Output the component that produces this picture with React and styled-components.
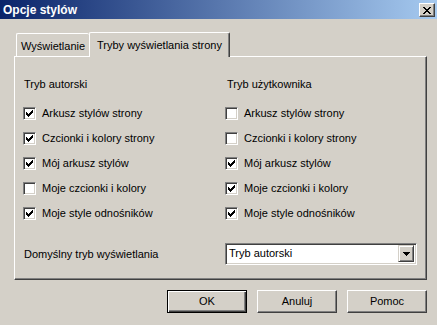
import React from "react";
import styled, { createGlobalStyle } from "styled-components";

const Global = createGlobalStyle`
  html, body { margin: 0; padding: 0; background: #d4d0c8; }
  body { font-family: "Liberation Sans", Arial, sans-serif; font-size: 11px; color: #000; }
`;

const Window = styled.div`
  width: 437px;
  height: 325px;
  background: #d4d0c8;
  display: flex;
  flex-direction: column;
  overflow: hidden;
`;

const TitleBar = styled.div`
  height: 19px;
  flex: none;
  display: flex;
  align-items: center;
  justify-content: space-between;
  padding: 0 2px 0 3px;
  background: linear-gradient(to right, #0a246a, #a6caf0);
`;

const Title = styled.span`
  color: #fff;
  font-weight: bold;
  font-size: 12px;
  line-height: 14px;
  padding-top: 1px;
`;

const CloseButton = styled.div`
  width: 16px;
  height: 14px;
  box-sizing: border-box;
  background: #d4d0c8;
  border: 1px solid;
  border-color: #fff #404040 #404040 #fff;
  box-shadow: inset -1px -1px #808080;
  display: flex;
  align-items: center;
  justify-content: center;
  margin-top: 1px;
`;

const TabRow = styled.div`
  display: flex;
  align-items: flex-end;
  padding-left: 16px;
  margin-top: 13px;
`;

const Tab = styled.div`
  box-sizing: border-box;
  height: ${p => (p.$active ? 25 : 23)}px;
  width: ${p => (p.$active ? 141 : 73)}px;
  margin-bottom: ${p => (p.$active ? -1 : 0)}px;
  position: relative;
  z-index: ${p => (p.$active ? 2 : 1)};
  background: #d4d0c8;
  border-top: 1px solid #fff;
  border-left: 1px solid #fff;
  border-right: ${p => (p.$active ? "1px solid #404040" : "none")};
  box-shadow: ${p => (p.$active ? "inset -1px 0 #808080" : "none")};
  border-radius: 2px 2px 0 0;
  display: flex;
  align-items: center;
  padding-left: ${p => (p.$active ? 7 : 4)}px;
  padding-top: ${p => (p.$active ? 1 : 2)}px;
  line-height: 13px;
  white-space: nowrap;
`;

const Panel = styled.div`
  box-sizing: border-box;
  margin-left: 14px;
  width: 413px;
  height: 224px;
  flex: none;
  border: 1px solid;
  border-color: #fff #404040 #404040 #fff;
  box-shadow: inset -1px -1px #808080;
  padding: 21px 0 0 8px;
  display: flex;
  flex-direction: column;
`;

const Columns = styled.div`
  display: grid;
  grid-template-columns: 202px 1fr;
`;

const Column = styled.div`
  display: flex;
  flex-direction: column;
`;

const Heading = styled.div`
  line-height: 13px;
  padding-left: ${p => p.$indent}px;
  margin-bottom: 10px;
`;

const CheckRow = styled.label`
  height: 25px;
  display: flex;
  align-items: center;
  line-height: 13px;
`;

const Box = styled.span`
  box-sizing: border-box;
  width: 13px;
  height: 13px;
  flex: none;
  background: #fff;
  border: 1px solid;
  border-color: #808080 #fff #fff #808080;
  box-shadow: inset 1px 1px #404040, inset -1px -1px #d4d0c8;
  position: relative;
  margin-right: 6px;
`;

const CheckSvg = styled.svg`
  position: absolute;
  left: -1px;
  top: -1px;
`;

const ComboRow = styled.div`
  display: flex;
  align-items: center;
  margin-top: 17px;
`;

const ComboLabel = styled.div`
  width: 201px;
  padding-left: 1px;
  line-height: 13px;
`;

const Combo = styled.div`
  box-sizing: border-box;
  width: 192px;
  height: 22px;
  background: #fff;
  border: 1px solid;
  border-color: #808080 #fff #fff #808080;
  box-shadow: inset 1px 1px #404040, inset -1px -1px #d4d0c8;
  display: flex;
  align-items: center;
  padding: 1px 2px 2px 2px;
`;

const ComboText = styled.div`
  flex: 1;
  padding-left: 1px;
  line-height: 13px;
`;

const ComboButton = styled.div`
  box-sizing: border-box;
  width: 16px;
  height: 17px;
  background: #d4d0c8;
  border: 1px solid;
  border-color: #d4d0c8 #404040 #404040 #d4d0c8;
  box-shadow: inset 1px 1px #fff, inset -1px -1px #808080;
  display: flex;
  align-items: center;
  justify-content: center;
`;

const ButtonRow = styled.div`
  display: flex;
  justify-content: flex-end;
  gap: 10px;
  padding-right: 10px;
  margin-top: 10px;
`;

const Button = styled.div`
  box-sizing: border-box;
  width: 80px;
  height: 23px;
  background: #d4d0c8;
  border: 1px solid;
  border-color: ${p => (p.$default ? "#000" : "#fff #404040 #404040 #fff")};
  box-shadow: ${p =>
    p.$default
      ? "inset 1px 1px #fff, inset -1px -1px #404040, inset -2px -2px #808080"
      : "inset -1px -1px #808080"};
  display: flex;
  align-items: center;
  justify-content: center;
  line-height: 13px;
`;

const CheckMark = () => (
  <CheckSvg width="13" height="13" viewBox="0 0 13 13" shapeRendering="crispEdges">
    <path
      fill="#000"
      d="M3 5h1v3H3zM4 6h1v3H4zM5 7h1v3H5zM6 6h1v3H6zM7 5h1v3H7zM8 4h1v3H8zM9 3h1v3H9z"
    />
  </CheckSvg>
);

const Check = ({ checked, children }) => (
  <CheckRow>
    <Box>{checked && <CheckMark />}</Box>
    {children}
  </CheckRow>
);

const author = [
  ["Arkusz stylów strony", true],
  ["Czcionki i kolory strony", true],
  ["Mój arkusz stylów", true],
  ["Moje czcionki i kolory", false],
  ["Moje style odnośników", true],
];
const user = [
  ["Arkusz stylów strony", false],
  ["Czcionki i kolory strony", false],
  ["Mój arkusz stylów", true],
  ["Moje czcionki i kolory", true],
  ["Moje style odnośników", true],
];

export default function App() {
  return (
    <>
      <Global />
      <Window>
        <TitleBar>
          <Title>Opcje stylów</Title>
          <CloseButton>
            <svg width="8" height="7" viewBox="0 0 8 7" shapeRendering="crispEdges">
              <path
                fill="#000"
                d="M0 0h2v1H0zM6 0h2v1H6zM1 1h2v1H1zM5 1h2v1H5zM2 2h4v1H2zM3 3h2v1H3zM2 4h4v1H2zM1 5h2v1H1zM5 5h2v1H5zM0 6h2v1H0zM6 6h2v1H6z"
              />
            </svg>
          </CloseButton>
        </TitleBar>
        <TabRow>
          <Tab>Wyświetlanie</Tab>
          <Tab $active>Tryby wyświetlania strony</Tab>
        </TabRow>
        <Panel>
          <Columns>
            <Column>
              <Heading $indent={1}>Tryb autorski</Heading>
              {author.map(([t, c]) => (
                <Check key={t} checked={c}>{t}</Check>
              ))}
            </Column>
            <Column>
              <Heading $indent={2}>Tryb użytkownika</Heading>
              {user.map(([t, c]) => (
                <Check key={t} checked={c}>{t}</Check>
              ))}
            </Column>
          </Columns>
          <ComboRow>
            <ComboLabel>Domyślny tryb wyświetlania</ComboLabel>
            <Combo>
              <ComboText>Tryb autorski</ComboText>
              <ComboButton>
                <svg width="7" height="4" viewBox="0 0 7 4" shapeRendering="crispEdges">
                  <path fill="#000" d="M0 0h7v1H0zM1 1h5v1H1zM2 2h3v1H2zM3 3h1v1H3z" />
                </svg>
              </ComboButton>
            </Combo>
          </ComboRow>
        </Panel>
        <ButtonRow>
          <Button $default>OK</Button>
          <Button>Anuluj</Button>
          <Button>Pomoc</Button>
        </ButtonRow>
      </Window>
    </>
  );
}
